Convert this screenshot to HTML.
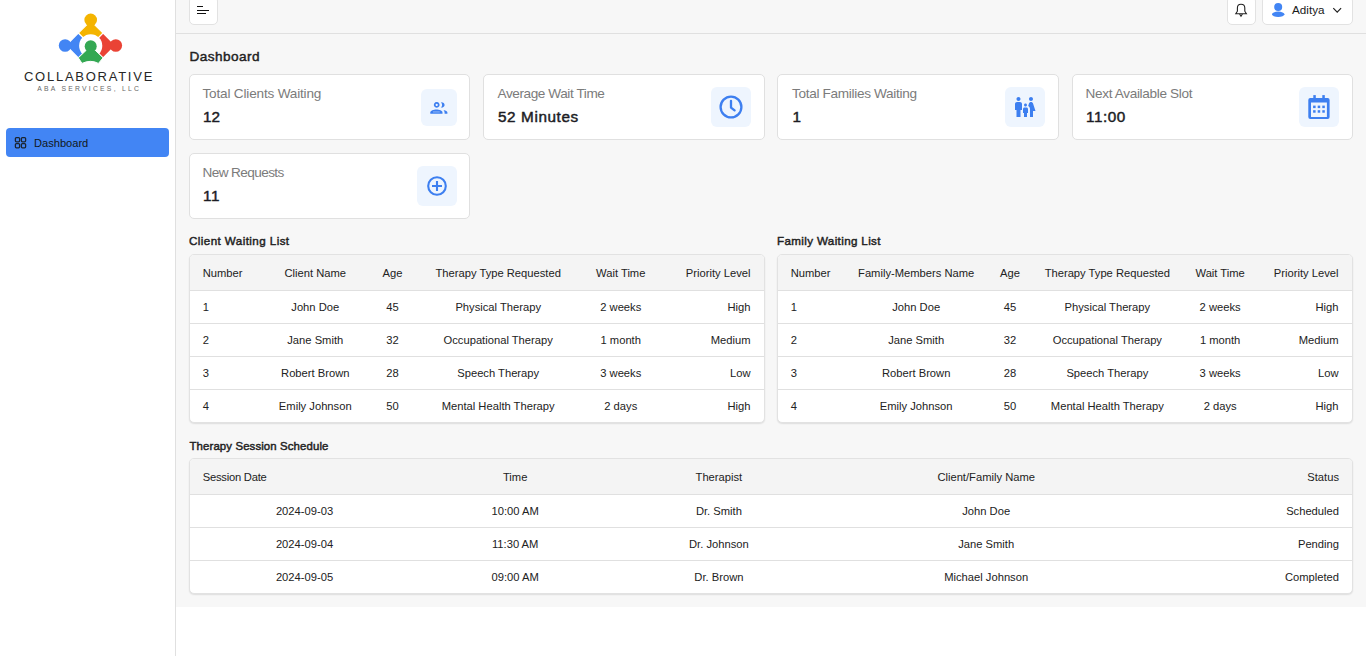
<!DOCTYPE html>
<html><head><meta charset="utf-8"><title>Dashboard</title>
<style>
html,body{margin:0;padding:0;width:1366px;height:656px;overflow:hidden;background:#fff;font-family:"Liberation Sans", sans-serif;}
#root{position:relative;width:1366px;height:656px;overflow:hidden;}
#side{position:absolute;left:0;top:0;width:175px;height:656px;background:#fff;border-right:1px solid #e0e0e0;}
#mainbg{position:absolute;left:176px;top:0;width:1190px;height:607px;background:#f7f7f7;}
.t{position:absolute;white-space:nowrap;}
.btn{position:absolute;background:#fff;border:1px solid #e2e2e2;border-radius:5px;box-sizing:border-box;}
.card{position:absolute;background:#fff;border:1px solid #e0e0e0;border-radius:5px;box-sizing:border-box;}
.ibox{position:absolute;background:#eef5fe;border-radius:6px;display:flex;align-items:center;justify-content:center;}
.ibox svg{display:block}
.paper{position:absolute;background:#fff;border-radius:5px;border:1px solid #e2e2e2;box-sizing:border-box;box-shadow:0 1px 1.5px rgba(0,0,0,.10);overflow:hidden;}
</style></head><body><div id="root">
<div id="side"></div><svg style="position:absolute;left:50px;top:8px" width="80" height="60" viewBox="50 8 80 60">
<g stroke="#fff" stroke-width="1.1" stroke-linejoin="miter">
<polygon points="90.7,20.8 103.1,33.15 90.7,45.5 78.3,33.15" fill="#F4B400"/>
<polygon points="115.5,45.5 103.1,57.85 90.7,45.5 103.1,33.15" fill="#EA4335"/>
<polygon points="66,45.5 78.3,33.15 90.7,45.5 78.3,57.85" fill="#4285F4"/>
</g>
<circle cx="90.7" cy="19.9" r="6.3" fill="#F4B400"/>
<circle cx="115.8" cy="45.5" r="6.3" fill="#EA4335"/>
<circle cx="65.1" cy="45.5" r="6.3" fill="#4285F4"/>
<circle cx="90.7" cy="45.8" r="11.6" fill="#fff"/>
<path d="M78.3,57.85 L86.5,50 L95,50 L103.1,57.85 L98.4,63.4 Q90.7,59.3 82,63.4 Z" fill="#34A853" stroke="#fff" stroke-width="1"/>
<circle cx="90.7" cy="46.3" r="6" fill="#34A853"/>
</svg><div class="t" style="top:68.50px;font-size:13px;line-height:15.6px;color:#262626;font-weight:400;letter-spacing:1.75px;left:-211.00px;width:600px;text-align:center;">COLLABORATIVE</div>
<div class="t" style="top:84.96px;font-size:6.8px;line-height:8.16px;color:#666;font-weight:400;letter-spacing:2.25px;left:-210.80px;width:600px;text-align:center;">ABA SERVICES, LLC</div>
<div style="position:absolute;left:6px;top:128px;width:163px;height:29px;background:#4285f4;border-radius:4px"></div><svg style="position:absolute;left:14px;top:136px" width="14" height="13" viewBox="0 0 14 13" fill="none" stroke="#1b2430" stroke-width="1.3">
<rect x="1.4" y="1.6" width="4.2" height="4.2" rx="1"/><rect x="7.4" y="1.6" width="4.2" height="4.2" rx="1"/>
<rect x="1.4" y="7.6" width="4.2" height="4.2" rx="1"/><rect x="7.4" y="7.6" width="4.2" height="4.2" rx="1"/>
</svg><div class="t" style="top:137.29px;font-size:11.1px;line-height:13.32px;color:#111820;font-weight:400;left:34.00px;">Dashboard</div>
<div id="mainbg"></div><div style="position:absolute;left:176px;top:33px;width:1190px;height:1px;background:#e0e0e0"></div><div class="btn" style="left:189px;top:-4px;width:28.5px;height:28.5px"></div><div style="position:absolute;left:197px;top:6px;width:6px;height:1.4px;background:#111"></div><div style="position:absolute;left:197px;top:9.6px;width:12px;height:1.4px;background:#111"></div><div style="position:absolute;left:197px;top:13px;width:8.5px;height:1.4px;background:#111"></div><div class="btn" style="left:1226.5px;top:-4px;width:29px;height:28.5px"></div><svg style="position:absolute;left:1233px;top:2px" width="16" height="16" viewBox="0 0 16 16" fill="none" stroke="#222" stroke-width="1.1">
<path d="M8,2.3 C5.6,2.3 4.4,3.8 4.4,6 L4.4,9.2 L2.8,11.7 L13.4,11.7 L11.8,9.2 L11.8,6 C11.8,3.8 10.4,2.3 8,2.3 Z"/>
<path d="M6.6,12 L8,14.3 L9.4,12"/>
</svg><div class="btn" style="left:1262px;top:-4px;width:90.5px;height:28.5px"></div><svg style="position:absolute;left:1270px;top:2px" width="16" height="16" viewBox="0 0 16 16" fill="#4285f4">
<circle cx="8.2" cy="4.9" r="4"/><ellipse cx="8.2" cy="12.3" rx="6.2" ry="2.7"/>
</svg><div class="t" style="top:2.83px;font-size:11.7px;line-height:14.04px;color:#1a1a1a;font-weight:400;left:1292.00px;">Aditya</div>
<svg style="position:absolute;left:1331px;top:5px" width="12" height="10" viewBox="0 0 12 10" fill="none" stroke="#222" stroke-width="1.2">
<path d="M2.3,3.2 L6.2,7.1 L10.1,3.2"/></svg><div class="t" style="top:48.83px;font-size:13.6px;line-height:16.32px;color:#222;font-weight:400;-webkit-text-stroke:0.45px currentColor;letter-spacing:0.45px;left:189.50px;">Dashboard</div>
<div class="card" style="left:189px;top:74px;width:281px;height:66px"></div><div class="t" style="top:86.13px;font-size:13.6px;line-height:16.32px;color:#7b7b7b;font-weight:400;letter-spacing:-0.19px;left:202.50px;">Total Clients Waiting</div>
<div class="t" style="top:108.42px;font-size:15.3px;line-height:18.36px;color:#1c1c24;font-weight:400;-webkit-text-stroke:0.45px currentColor;left:203.00px;">12</div>
<div class="ibox" style="left:421.00px;top:89.00px;width:36px;height:37px"><svg width="36" height="37" viewBox="0 0 36 37"><g fill="#3d7ff0"><path fill-rule="evenodd" d="M15.7,13 a2.9,2.9 0 1,0 0.001,0 Z M15.7,14.8 a1.1,1.1 0 1,1 -0.001,0 Z"/><path d="M19.8,13.3 C22.2,13.1 23.6,14.4 23.6,15.95 C23.6,17.5 22.2,18.8 19.8,18.6 C20.6,17.9 21.1,17 21.1,15.95 C21.1,14.9 20.6,14 19.8,13.3 Z"/><path d="M9.3,24.8 L9.3,23.4 C9.3,21.7 12.6,20.6 15.4,20.6 C18.2,20.6 21.5,21.7 21.5,23.4 L21.5,24.8 Z"/><path d="M22.4,20.9 C24.9,21.3 26.4,22.3 26.4,23.6 L26.4,24.8 L23.6,24.8 L23.6,23.6 C23.6,22.5 23.1,21.6 22.4,20.9 Z"/></g><rect x="12" y="22.5" width="6.8" height="0.9" fill="#9fc0f7"/></svg></div><div class="card" style="left:483px;top:74px;width:282px;height:66px"></div><div class="t" style="top:86.13px;font-size:13.6px;line-height:16.32px;color:#7b7b7b;font-weight:400;letter-spacing:-0.42px;left:497.50px;">Average Wait Time</div>
<div class="t" style="top:108.42px;font-size:15.3px;line-height:18.36px;color:#1c1c24;font-weight:400;-webkit-text-stroke:0.45px currentColor;letter-spacing:0.6px;left:498.00px;">52 Minutes</div>
<div class="ibox" style="left:711.00px;top:87.00px;width:40px;height:40px"><svg width="26" height="26" viewBox="0 0 26 26" fill="none" stroke="#3d7ff0" stroke-width="2.3" stroke-linecap="round" stroke-linejoin="round"><circle cx="13" cy="13" r="10.4"/><path d="M13,6.8 L13,13.6 L16.6,16.4"/></svg></div><div class="card" style="left:777px;top:74px;width:282px;height:66px"></div><div class="t" style="top:86.13px;font-size:13.6px;line-height:16.32px;color:#7b7b7b;font-weight:400;letter-spacing:-0.32px;left:792.00px;">Total Families Waiting</div>
<div class="t" style="top:108.42px;font-size:15.3px;line-height:18.36px;color:#1c1c24;font-weight:400;-webkit-text-stroke:0.45px currentColor;left:792.50px;">1</div>
<div class="ibox" style="left:1005.00px;top:87.00px;width:40px;height:40px"><svg width="24" height="24" viewBox="0 0 24 24" fill="#3d7ff0"><path d="M16 4c0-1.11.89-2 2-2s2 .89 2 2-.89 2-2 2-2-.89-2-2m4 18v-6h2.5l-2.54-7.63C19.68 7.55 18.92 7 18.06 7h-.12c-.86 0-1.63.55-1.9 1.37l-.86 2.58c1.08.6 1.820 1.73 1.82 3.05v8zm-7.5-10.5c.83 0 1.5-.67 1.5-1.5s-.67-1.5-1.5-1.5S11 9.17 11 10s.67 1.5 1.5 1.5M5.5 6c1.11 0 2-.89 2-2s-.89-2-2-2-2 .89-2 2 .89 2 2 2m2 16v-7H9V9c0-1.1-.9-2-2-2H4c-1.1 0-2 .9-2 2v6h1.5v7zm6.5 0v-4h1v-4c0-.82-.68-1.5-1.5-1.5h-2c-.82 0-1.5.68-1.5 1.5v4h1v4z"/></svg></div><div class="card" style="left:1072px;top:74px;width:281px;height:66px"></div><div class="t" style="top:86.13px;font-size:13.6px;line-height:16.32px;color:#7b7b7b;font-weight:400;letter-spacing:-0.34px;left:1085.50px;">Next Available Slot</div>
<div class="t" style="top:108.42px;font-size:15.3px;line-height:18.36px;color:#1c1c24;font-weight:400;-webkit-text-stroke:0.45px currentColor;letter-spacing:0.55px;left:1086.00px;">11:00</div>
<div class="ibox" style="left:1299.00px;top:87.00px;width:40px;height:40px"><svg width="40" height="40" viewBox="0 0 40 40"><g fill="#3d7ff0"><path fill-rule="evenodd" d="M11.3,11 H28.6 Q30.6,11 30.6,13 V30 Q30.6,32 28.6,32 H11.3 Q9.3,32 9.3,30 V13 Q9.3,11 11.3,11 Z M12,15.6 V29.9 H27.9 V15.6 Z"/><rect x="14.3" y="8.1" width="2.5" height="4"/><rect x="23.3" y="8.1" width="2.5" height="4"/><rect x="14.1" y="18.6" width="2.5" height="2.5"/><rect x="18.7" y="18.6" width="2.5" height="2.5"/><rect x="23.3" y="18.6" width="2.5" height="2.5"/><rect x="14.1" y="23.2" width="2.5" height="2.5"/><rect x="18.7" y="23.2" width="2.5" height="2.5"/><rect x="23.3" y="23.2" width="2.5" height="2.5"/></g></svg></div><div class="card" style="left:189px;top:153px;width:281px;height:66px"></div><div class="t" style="top:165.13px;font-size:13.6px;line-height:16.32px;color:#7b7b7b;font-weight:400;letter-spacing:-0.6px;left:202.50px;">New Requests</div>
<div class="t" style="top:187.42px;font-size:15.3px;line-height:18.36px;color:#1c1c24;font-weight:400;-webkit-text-stroke:0.45px currentColor;letter-spacing:0.6px;left:203.00px;">11</div>
<div class="ibox" style="left:417.00px;top:166.00px;width:40px;height:40px"><svg width="24" height="24" viewBox="0 0 24 24" fill="none" stroke="#3d7ff0" stroke-width="2.1" stroke-linecap="butt"><circle cx="12" cy="12" r="8.8"/><path d="M7,12 H17 M12,7 V17"/></svg></div><div class="t" style="top:234.02px;font-size:11.6px;line-height:13.92px;color:#222;font-weight:400;-webkit-text-stroke:0.45px currentColor;letter-spacing:0.43px;left:189.00px;">Client Waiting List</div>
<div class="paper" style="left:189.00px;top:254.00px;width:576.00px;height:168.5px"><div style="position:absolute;left:0;top:0;width:100%;height:36px;background:#f4f4f4;border-radius:0"></div><div style="position:absolute;left:0;top:35px;width:100%;height:1px;background:#e0e0e0"></div><div style="position:absolute;left:0;top:68px;width:100%;height:1px;background:#e0e0e0"></div><div style="position:absolute;left:0;top:101px;width:100%;height:1px;background:#e0e0e0"></div><div style="position:absolute;left:0;top:134px;width:100%;height:1px;background:#e0e0e0"></div></div><div class="t" style="top:266.90px;font-size:11.2px;line-height:13.44px;color:#222;font-weight:400;left:202.70px;">Number</div>
<div class="t" style="top:300.90px;font-size:11.2px;line-height:13.44px;color:#222;font-weight:400;left:202.70px;">1</div>
<div class="t" style="top:333.90px;font-size:11.2px;line-height:13.44px;color:#222;font-weight:400;left:202.70px;">2</div>
<div class="t" style="top:366.90px;font-size:11.2px;line-height:13.44px;color:#222;font-weight:400;left:202.70px;">3</div>
<div class="t" style="top:399.90px;font-size:11.2px;line-height:13.44px;color:#222;font-weight:400;left:202.70px;">4</div>
<div class="t" style="top:266.90px;font-size:11.2px;line-height:13.44px;color:#222;font-weight:400;left:15.25px;width:600px;text-align:center;">Client Name</div>
<div class="t" style="top:300.90px;font-size:11.2px;line-height:13.44px;color:#222;font-weight:400;left:15.25px;width:600px;text-align:center;">John Doe</div>
<div class="t" style="top:333.90px;font-size:11.2px;line-height:13.44px;color:#222;font-weight:400;left:15.25px;width:600px;text-align:center;">Jane Smith</div>
<div class="t" style="top:366.90px;font-size:11.2px;line-height:13.44px;color:#222;font-weight:400;left:15.25px;width:600px;text-align:center;">Robert Brown</div>
<div class="t" style="top:399.90px;font-size:11.2px;line-height:13.44px;color:#222;font-weight:400;left:15.25px;width:600px;text-align:center;">Emily Johnson</div>
<div class="t" style="top:266.90px;font-size:11.2px;line-height:13.44px;color:#222;font-weight:400;left:92.50px;width:600px;text-align:center;">Age</div>
<div class="t" style="top:300.90px;font-size:11.2px;line-height:13.44px;color:#222;font-weight:400;left:92.50px;width:600px;text-align:center;">45</div>
<div class="t" style="top:333.90px;font-size:11.2px;line-height:13.44px;color:#222;font-weight:400;left:92.50px;width:600px;text-align:center;">32</div>
<div class="t" style="top:366.90px;font-size:11.2px;line-height:13.44px;color:#222;font-weight:400;left:92.50px;width:600px;text-align:center;">28</div>
<div class="t" style="top:399.90px;font-size:11.2px;line-height:13.44px;color:#222;font-weight:400;left:92.50px;width:600px;text-align:center;">50</div>
<div class="t" style="top:266.90px;font-size:11.2px;line-height:13.44px;color:#222;font-weight:400;left:198.20px;width:600px;text-align:center;">Therapy Type Requested</div>
<div class="t" style="top:300.90px;font-size:11.2px;line-height:13.44px;color:#222;font-weight:400;left:198.20px;width:600px;text-align:center;">Physical Therapy</div>
<div class="t" style="top:333.90px;font-size:11.2px;line-height:13.44px;color:#222;font-weight:400;left:198.20px;width:600px;text-align:center;">Occupational Therapy</div>
<div class="t" style="top:366.90px;font-size:11.2px;line-height:13.44px;color:#222;font-weight:400;left:198.20px;width:600px;text-align:center;">Speech Therapy</div>
<div class="t" style="top:399.90px;font-size:11.2px;line-height:13.44px;color:#222;font-weight:400;left:198.20px;width:600px;text-align:center;">Mental Health Therapy</div>
<div class="t" style="top:266.90px;font-size:11.2px;line-height:13.44px;color:#222;font-weight:400;left:320.75px;width:600px;text-align:center;">Wait Time</div>
<div class="t" style="top:300.90px;font-size:11.2px;line-height:13.44px;color:#222;font-weight:400;left:320.75px;width:600px;text-align:center;">2 weeks</div>
<div class="t" style="top:333.90px;font-size:11.2px;line-height:13.44px;color:#222;font-weight:400;left:320.75px;width:600px;text-align:center;">1 month</div>
<div class="t" style="top:366.90px;font-size:11.2px;line-height:13.44px;color:#222;font-weight:400;left:320.75px;width:600px;text-align:center;">3 weeks</div>
<div class="t" style="top:399.90px;font-size:11.2px;line-height:13.44px;color:#222;font-weight:400;left:320.75px;width:600px;text-align:center;">2 days</div>
<div class="t" style="top:266.90px;font-size:11.2px;line-height:13.44px;color:#222;font-weight:400;left:150.50px;width:600px;text-align:right;">Priority Level</div>
<div class="t" style="top:300.90px;font-size:11.2px;line-height:13.44px;color:#222;font-weight:400;left:150.50px;width:600px;text-align:right;">High</div>
<div class="t" style="top:333.90px;font-size:11.2px;line-height:13.44px;color:#222;font-weight:400;left:150.50px;width:600px;text-align:right;">Medium</div>
<div class="t" style="top:366.90px;font-size:11.2px;line-height:13.44px;color:#222;font-weight:400;left:150.50px;width:600px;text-align:right;">Low</div>
<div class="t" style="top:399.90px;font-size:11.2px;line-height:13.44px;color:#222;font-weight:400;left:150.50px;width:600px;text-align:right;">High</div>
<div class="t" style="top:234.02px;font-size:11.6px;line-height:13.92px;color:#222;font-weight:400;-webkit-text-stroke:0.45px currentColor;letter-spacing:0.37px;left:777.00px;">Family Waiting List</div>
<div class="paper" style="left:777.00px;top:254.00px;width:576.00px;height:168.5px"><div style="position:absolute;left:0;top:0;width:100%;height:36px;background:#f4f4f4;border-radius:0"></div><div style="position:absolute;left:0;top:35px;width:100%;height:1px;background:#e0e0e0"></div><div style="position:absolute;left:0;top:68px;width:100%;height:1px;background:#e0e0e0"></div><div style="position:absolute;left:0;top:101px;width:100%;height:1px;background:#e0e0e0"></div><div style="position:absolute;left:0;top:134px;width:100%;height:1px;background:#e0e0e0"></div></div><div class="t" style="top:266.90px;font-size:11.2px;line-height:13.44px;color:#222;font-weight:400;left:790.70px;">Number</div>
<div class="t" style="top:300.90px;font-size:11.2px;line-height:13.44px;color:#222;font-weight:400;left:790.70px;">1</div>
<div class="t" style="top:333.90px;font-size:11.2px;line-height:13.44px;color:#222;font-weight:400;left:790.70px;">2</div>
<div class="t" style="top:366.90px;font-size:11.2px;line-height:13.44px;color:#222;font-weight:400;left:790.70px;">3</div>
<div class="t" style="top:399.90px;font-size:11.2px;line-height:13.44px;color:#222;font-weight:400;left:790.70px;">4</div>
<div class="t" style="top:266.90px;font-size:11.2px;line-height:13.44px;color:#222;font-weight:400;left:616.20px;width:600px;text-align:center;">Family-Members Name</div>
<div class="t" style="top:300.90px;font-size:11.2px;line-height:13.44px;color:#222;font-weight:400;left:616.20px;width:600px;text-align:center;">John Doe</div>
<div class="t" style="top:333.90px;font-size:11.2px;line-height:13.44px;color:#222;font-weight:400;left:616.20px;width:600px;text-align:center;">Jane Smith</div>
<div class="t" style="top:366.90px;font-size:11.2px;line-height:13.44px;color:#222;font-weight:400;left:616.20px;width:600px;text-align:center;">Robert Brown</div>
<div class="t" style="top:399.90px;font-size:11.2px;line-height:13.44px;color:#222;font-weight:400;left:616.20px;width:600px;text-align:center;">Emily Johnson</div>
<div class="t" style="top:266.90px;font-size:11.2px;line-height:13.44px;color:#222;font-weight:400;left:709.95px;width:600px;text-align:center;">Age</div>
<div class="t" style="top:300.90px;font-size:11.2px;line-height:13.44px;color:#222;font-weight:400;left:709.95px;width:600px;text-align:center;">45</div>
<div class="t" style="top:333.90px;font-size:11.2px;line-height:13.44px;color:#222;font-weight:400;left:709.95px;width:600px;text-align:center;">32</div>
<div class="t" style="top:366.90px;font-size:11.2px;line-height:13.44px;color:#222;font-weight:400;left:709.95px;width:600px;text-align:center;">28</div>
<div class="t" style="top:399.90px;font-size:11.2px;line-height:13.44px;color:#222;font-weight:400;left:709.95px;width:600px;text-align:center;">50</div>
<div class="t" style="top:266.90px;font-size:11.2px;line-height:13.44px;color:#222;font-weight:400;left:807.35px;width:600px;text-align:center;">Therapy Type Requested</div>
<div class="t" style="top:300.90px;font-size:11.2px;line-height:13.44px;color:#222;font-weight:400;left:807.35px;width:600px;text-align:center;">Physical Therapy</div>
<div class="t" style="top:333.90px;font-size:11.2px;line-height:13.44px;color:#222;font-weight:400;left:807.35px;width:600px;text-align:center;">Occupational Therapy</div>
<div class="t" style="top:366.90px;font-size:11.2px;line-height:13.44px;color:#222;font-weight:400;left:807.35px;width:600px;text-align:center;">Speech Therapy</div>
<div class="t" style="top:399.90px;font-size:11.2px;line-height:13.44px;color:#222;font-weight:400;left:807.35px;width:600px;text-align:center;">Mental Health Therapy</div>
<div class="t" style="top:266.90px;font-size:11.2px;line-height:13.44px;color:#222;font-weight:400;left:920.15px;width:600px;text-align:center;">Wait Time</div>
<div class="t" style="top:300.90px;font-size:11.2px;line-height:13.44px;color:#222;font-weight:400;left:920.15px;width:600px;text-align:center;">2 weeks</div>
<div class="t" style="top:333.90px;font-size:11.2px;line-height:13.44px;color:#222;font-weight:400;left:920.15px;width:600px;text-align:center;">1 month</div>
<div class="t" style="top:366.90px;font-size:11.2px;line-height:13.44px;color:#222;font-weight:400;left:920.15px;width:600px;text-align:center;">3 weeks</div>
<div class="t" style="top:399.90px;font-size:11.2px;line-height:13.44px;color:#222;font-weight:400;left:920.15px;width:600px;text-align:center;">2 days</div>
<div class="t" style="top:266.90px;font-size:11.2px;line-height:13.44px;color:#222;font-weight:400;left:738.50px;width:600px;text-align:right;">Priority Level</div>
<div class="t" style="top:300.90px;font-size:11.2px;line-height:13.44px;color:#222;font-weight:400;left:738.50px;width:600px;text-align:right;">High</div>
<div class="t" style="top:333.90px;font-size:11.2px;line-height:13.44px;color:#222;font-weight:400;left:738.50px;width:600px;text-align:right;">Medium</div>
<div class="t" style="top:366.90px;font-size:11.2px;line-height:13.44px;color:#222;font-weight:400;left:738.50px;width:600px;text-align:right;">Low</div>
<div class="t" style="top:399.90px;font-size:11.2px;line-height:13.44px;color:#222;font-weight:400;left:738.50px;width:600px;text-align:right;">High</div>
<div class="t" style="top:440.11px;font-size:11.4px;line-height:13.68px;color:#222;font-weight:400;-webkit-text-stroke:0.45px currentColor;letter-spacing:0.12px;left:189.50px;">Therapy Session Schedule</div>
<div class="paper" style="left:189.00px;top:458.00px;width:1164.00px;height:135.5px"><div style="position:absolute;left:0;top:0;width:100%;height:36px;background:#f4f4f4;border-radius:0"></div><div style="position:absolute;left:0;top:35px;width:100%;height:1px;background:#e0e0e0"></div><div style="position:absolute;left:0;top:68px;width:100%;height:1px;background:#e0e0e0"></div><div style="position:absolute;left:0;top:101px;width:100%;height:1px;background:#e0e0e0"></div></div><div class="t" style="top:470.90px;font-size:11.2px;line-height:13.44px;color:#222;font-weight:400;letter-spacing:-0.22px;left:202.70px;">Session Date</div>
<div class="t" style="top:504.90px;font-size:11.2px;line-height:13.44px;color:#222;font-weight:400;left:4.50px;width:600px;text-align:center;">2024-09-03</div>
<div class="t" style="top:537.90px;font-size:11.2px;line-height:13.44px;color:#222;font-weight:400;left:4.50px;width:600px;text-align:center;">2024-09-04</div>
<div class="t" style="top:570.90px;font-size:11.2px;line-height:13.44px;color:#222;font-weight:400;left:4.50px;width:600px;text-align:center;">2024-09-05</div>
<div class="t" style="top:470.90px;font-size:11.2px;line-height:13.44px;color:#222;font-weight:400;left:215.20px;width:600px;text-align:center;">Time</div>
<div class="t" style="top:504.90px;font-size:11.2px;line-height:13.44px;color:#222;font-weight:400;left:215.20px;width:600px;text-align:center;">10:00 AM</div>
<div class="t" style="top:537.90px;font-size:11.2px;line-height:13.44px;color:#222;font-weight:400;left:215.20px;width:600px;text-align:center;">11:30 AM</div>
<div class="t" style="top:570.90px;font-size:11.2px;line-height:13.44px;color:#222;font-weight:400;left:215.20px;width:600px;text-align:center;">09:00 AM</div>
<div class="t" style="top:470.90px;font-size:11.2px;line-height:13.44px;color:#222;font-weight:400;left:418.90px;width:600px;text-align:center;">Therapist</div>
<div class="t" style="top:504.90px;font-size:11.2px;line-height:13.44px;color:#222;font-weight:400;left:418.90px;width:600px;text-align:center;">Dr. Smith</div>
<div class="t" style="top:537.90px;font-size:11.2px;line-height:13.44px;color:#222;font-weight:400;left:418.90px;width:600px;text-align:center;">Dr. Johnson</div>
<div class="t" style="top:570.90px;font-size:11.2px;line-height:13.44px;color:#222;font-weight:400;left:418.90px;width:600px;text-align:center;">Dr. Brown</div>
<div class="t" style="top:470.90px;font-size:11.2px;line-height:13.44px;color:#222;font-weight:400;left:686.20px;width:600px;text-align:center;">Client/Family Name</div>
<div class="t" style="top:504.90px;font-size:11.2px;line-height:13.44px;color:#222;font-weight:400;left:686.20px;width:600px;text-align:center;">John Doe</div>
<div class="t" style="top:537.90px;font-size:11.2px;line-height:13.44px;color:#222;font-weight:400;left:686.20px;width:600px;text-align:center;">Jane Smith</div>
<div class="t" style="top:570.90px;font-size:11.2px;line-height:13.44px;color:#222;font-weight:400;left:686.20px;width:600px;text-align:center;">Michael Johnson</div>
<div class="t" style="top:470.90px;font-size:11.2px;line-height:13.44px;color:#222;font-weight:400;left:739.00px;width:600px;text-align:right;">Status</div>
<div class="t" style="top:504.90px;font-size:11.2px;line-height:13.44px;color:#222;font-weight:400;left:739.00px;width:600px;text-align:right;">Scheduled</div>
<div class="t" style="top:537.90px;font-size:11.2px;line-height:13.44px;color:#222;font-weight:400;left:739.00px;width:600px;text-align:right;">Pending</div>
<div class="t" style="top:570.90px;font-size:11.2px;line-height:13.44px;color:#222;font-weight:400;left:739.00px;width:600px;text-align:right;">Completed</div>

</div></body></html>
